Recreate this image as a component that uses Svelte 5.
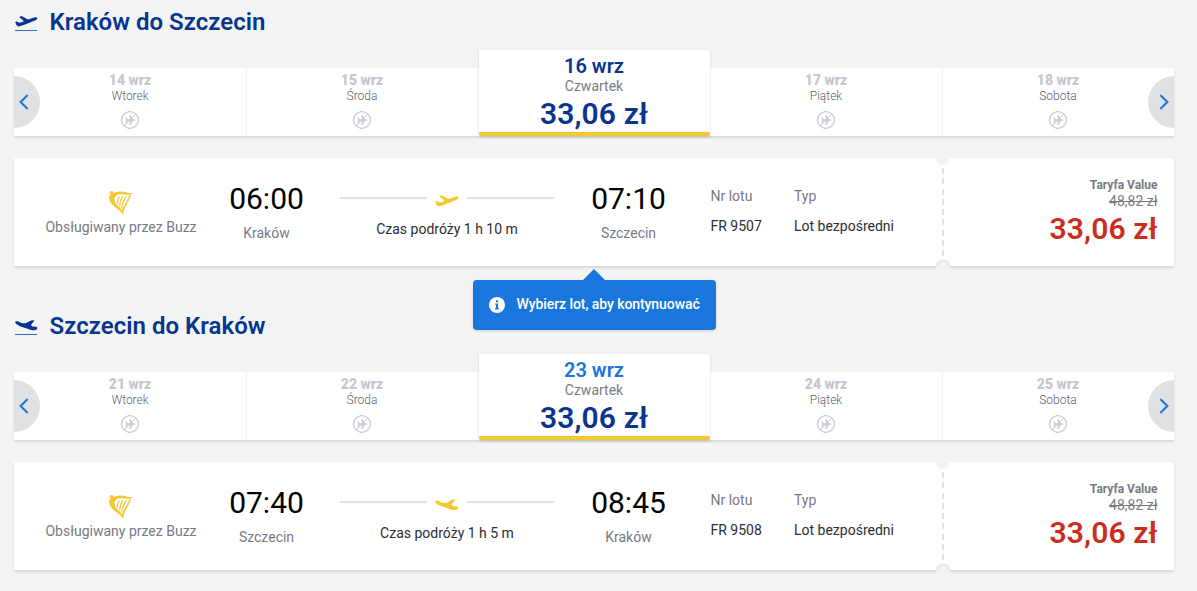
<script>
  const trips = [
    {
      title: 'Kraków do Szczecin', inbound: false,
      days: [['14 wrz', 'Wtorek'], ['15 wrz', 'Środa'], ['16 wrz', 'Czwartek'], ['17 wrz', 'Piątek'], ['18 wrz', 'Sobota']],
      depart: '06:00', from: 'Kraków', arrive: '07:10', to: 'Szczecin',
      duration: 'Czas podróży 1 h 10 m', number: 'FR 9507'
    },
    {
      title: 'Szczecin do Kraków', inbound: true,
      days: [['21 wrz', 'Wtorek'], ['22 wrz', 'Środa'], ['23 wrz', 'Czwartek'], ['24 wrz', 'Piątek'], ['25 wrz', 'Sobota']],
      depart: '07:40', from: 'Szczecin', arrive: '08:45', to: 'Kraków',
      duration: 'Czas podróży 1 h 5 m', number: 'FR 9508'
    }
  ];
</script>

{#snippet planeShape(inbound)}
  {#if inbound}
    <path d="M0 2.4.8 1.3 2.2 1.2C4 1.5 5.3 2.6 7.3 3.3L11.2 3.5 15.2 1.3C17 .2 18.8-.1 20.2.5L16.6 5.1 18.2 6.8 22 7C23.2 7.3 23.5 8.2 23 9.4 22 10.9 19.2 10.9 16.8 10.3L5.2 6.4C2.9 5.5 1 4.2 0 2.4Z" />
  {:else}
    <path d="M0 6.2 1.6 5.6 5 7 9 5.8 8.6 4.4 4.5 1.4C5 .3 6.5-.1 7.9.4L13.4 3.6 18.2 2C20.6 1 23 .9 23.4 2 23.5 3.1 22.1 4.1 20.3 4.9L9.9 9.2C7.5 10.2 5 10.9 3.4 10.8 2 10.5 1.3 9.6 1.1 8.2Z" />
  {/if}
{/snippet}

{#snippet chevron()}
  <svg width="10" height="16" viewBox="0 0 10 16"><path d="M8.7 1 1.6 8l7.1 7" fill="none" stroke="#1976dc" stroke-width="2" /></svg>
{/snippet}

<main>
  {#each trips as trip, i}
    <section class="trip">
      <h2>
        <svg class="title-icon" width="23" height="18" viewBox="0 0 23 18" fill="#073590">
          <g transform="translate(0 1) scale(.96 .96)">{@render planeShape(trip.inbound)}</g>
          <path d="M0 15h22v1H0z" fill="#366dbd" />
        </svg>
        {trip.title}
      </h2>

      <div class="carousel">
        {#each trip.days as [date, weekday], d}
          {#if d === 2}
            <div class="day selected" class:accent={trip.inbound}>
              <strong>{date}</strong>
              <span>{weekday}</span>
              <b class="fare">33,06 zł</b>
            </div>
          {:else}
            <div class="day">
              <strong>{date}</strong>
              <span>{weekday}</span>
              <svg width="18" height="18" viewBox="0 0 18 18" fill="none" stroke="#c4c8ce">
                <circle cx="9" cy="9" r="8.4" stroke-width="1.2" />
                <path d="M4.6 6.2h.9l1.1 2h2.6L8.3 4.3h1.2l2.3 3.9h1.7l1.2.8-1.2.8h-1.7l-2.3 3.9H8.3l.9-3.9H6.6l-1.1 2h-.9l.5-2.8Z" fill="#c4c8ce" stroke="none" />
                <path d="m3 15 12-12" stroke-width="1" />
              </svg>
            </div>
          {/if}
        {/each}
        <div class="arrow prev">{@render chevron()}</div>
        <div class="arrow next">{@render chevron()}</div>
      </div>

      <div class="ticket">
        <div class="operator">
          <svg width="24" height="24" viewBox="0 0 24 24" fill="#f1c933">
            <path d="M.8 1C1.7-.1 3.7-.2 4.5.8 4.9 1.4 4.8 2 4.6 2.4 6.3 1.2 8.6.3 11.5.4 15.5.5 18.2 2.3 23.8 2 22.7 3.2 20.5 3.9 18 3.8 14 3.6 9.5 2.3 6.7 5 4.8 7 5.2 10.2 6.8 12.3 8.6 14.7 11.8 16.2 13 19.4 14.3 14.7 18.4 11 20.4 4.1L21.9 3.7C20.8 10.5 15.1 14.8 13.8 24 12.3 19.2 6.2 17.2 2.8 13.2.2 10.1-.5 6.9.5 5.1L1.7 3.8C1.3 3 .9 2.4.4 1.9Z" />
            <path d="M10.5 5.5Q8.2 9.1 8.5 12.7M14 5.2Q10.5 10.6 10.8 15M17.3 5.2Q12.9 12 12.9 16.8" fill="none" stroke="#f1c933" stroke-width="1.2" />
          </svg>
          <span>Obsługiwany przez Buzz</span>
        </div>
        <div class="stop"><b>{trip.depart}</b><span>{trip.from}</span></div>
        <div class="journey">
          <div class="line">
            <i></i>
            <svg width="24" height="12" viewBox="0 -.4 24 12" fill="#f1c933">{@render planeShape(trip.inbound)}</svg>
            <i></i>
          </div>
          <span>{trip.duration}</span>
        </div>
        <div class="stop"><b>{trip.arrive}</b><span>{trip.to}</span></div>
        <dl class="number"><dt>Nr lotu</dt><dd>{trip.number}</dd></dl>
        <dl><dt>Typ</dt><dd>Lot bezpośredni</dd></dl>
        <div class="tear"></div>
        <div class="price">
          <strong>Taryfa Value</strong>
          <s>48,82 zł</s>
          <b>33,06 zł</b>
        </div>
      </div>

      {#if i === 0}
        <div class="tip">
          <svg width="16" height="16" viewBox="0 0 16 16">
            <circle cx="8" cy="8" r="8" fill="#fff" />
            <path d="M7 3.2h2v2H7zM6.2 6.6H9v4.6h1v1.2H6v-1.2h1V7.8h-.8z" fill="#1976dc" />
          </svg>
          <span>Wybierz lot, aby kontynuować</span>
        </div>
      {/if}
    </section>
  {/each}
</main>

<style>
  :global(body) { background: #f4f4f4; }
  main {
    height: 591px;
    overflow: hidden;
    font: 400 14px/20px Roboto, "Liberation Sans", sans-serif;
    color: #2b2d31;
  }
  svg { display: block; flex: none; }
  .trip { position: relative; height: 304px; width: 1160px; padding-left: 14px; }
  h2 {
    display: flex; align-items: center; gap: 11.5px;
    height: 44px; margin: 0; padding-left: 1px;
    font-size: 24px; line-height: 28px; font-weight: 600; letter-spacing: .03px; color: #073590;
  }
  .title-icon { margin-top: 3px; }
  .carousel {
    position: relative; display: grid; grid-template-columns: repeat(5, 232px);
    height: 68px; margin-top: 24px; background: #fff;
    box-shadow: 0 2px 2px rgba(0, 0, 0, .11);
  }
  .day {
    display: flex; flex-direction: column; align-items: center;
    box-sizing: border-box; height: 68px; padding-top: 4px; background: #fff;
  }
  .day + .day { box-shadow: inset 1px 0 #f1f1f1; }
  .day strong { font-size: 14px; line-height: 16px; font-weight: 900; color: #c4c8ce; }
  .day span { font-size: 12px; line-height: 16px; font-weight: 300; color: #5b606b; }
  .day svg { margin-top: 7px; }
  .day + .selected {
    height: 86px; margin: -18px 0 0 1px; padding-top: 5px;
    border-bottom: 4px solid #f1c933; border-radius: 2px;
    box-shadow: 0 1px 3px rgba(0, 0, 0, .15);
  }
  .selected strong { margin-right: 1px; font-size: 20px; line-height: 22px; font-weight: 600; color: #073590; }
  .selected.accent strong { color: #1976dc; }
  .selected span { margin-right: 1px; font-size: 14px; line-height: 18px; font-weight: 400; color: #777b84; }
  .selected .fare { margin: 1px 1px 0 0; font-size: 30px; line-height: 36px; font-weight: 600; letter-spacing: .1px; color: #073590; }
  .arrow {
    position: absolute; top: 8px; left: 0; display: flex; align-items: center;
    box-sizing: border-box; width: 26px; height: 52px; padding-left: 5px;
    background: #e0e1e3; border-radius: 0 26px 26px 0;
  }
  .next { left: auto; right: 0; transform: scaleX(-1); }
  .ticket {
    display: flex; height: 108px; margin-top: 22px; background: #fff;
    box-shadow: 0 2px 3px rgba(0, 0, 0, .13); border-radius: 1px;
  }
  .operator {
    display: flex; flex-direction: column; align-items: center;
    width: 214px; padding-top: 33px; color: #777b84;
  }
  .operator span { margin-top: 2px; }
  .stop { display: flex; flex-direction: column; align-items: center; width: 77px; padding-top: 23px; }
  .stop b { font-size: 30px; line-height: 36px; font-weight: 400; color: #000; }
  .stop span { margin-top: 6px; color: #777b84; }
  .journey { width: 214px; margin: 0 36px 0 35px; padding-top: 37px; text-align: center; }
  .line { display: flex; justify-content: space-between; margin-bottom: 12px; }
  .line i { width: 87px; height: 2px; margin-top: 2px; background: #e1e1e1; }
  dl { width: 142px; margin: 0; padding-top: 28px; }
  dl.number { width: 83.5px; padding-left: 43.5px; }
  dt { color: #777b84; }
  dd { margin: 10px 0 0; }
  .tear {
    width: 14px; height: 112px;
    background:
      radial-gradient(circle at 7px 0, #f4f4f4 6.5px, transparent 7.2px),
      radial-gradient(circle at 7px 109px, #f4f4f4 4px, #e7e7e7 7px, transparent 7.7px) 0 0 / 14px 108px no-repeat,
      linear-gradient(#f0f0f0, #f4f4f4) 0 108px / 14px 4px no-repeat,
      repeating-linear-gradient(#e1e1e1 0 6px, transparent 6px 10.3px) 6px 10px / 2px 89px no-repeat;
  }
  .price {
    display: flex; flex-direction: column; align-items: flex-end;
    flex: 1; padding: 19px 16.5px 0 0;
  }
  .price strong { font-size: 12px; line-height: 16px; color: #777b84; }
  .price s { line-height: 16px; color: #777b84; }
  .price b { margin-top: 2px; font-size: 30px; line-height: 36px; font-weight: 600; letter-spacing: .1px; color: #cc2d1e; }
  .tip {
    position: absolute; left: 473px; top: 280px; z-index: 2;
    display: flex; align-items: center; gap: 11.5px;
    box-sizing: border-box; width: 243px; height: 50px; padding: 0 0 2px 16px;
    background: #1976dc; border-radius: 4px; color: #fff; font-weight: 500;
    letter-spacing: -.08px;
    box-shadow: 0 1px 3px rgba(0, 0, 0, .15); white-space: nowrap;
  }
  .tip svg { margin-top: 2px; }
  .tip::before {
    content: ""; position: absolute; left: 110px; top: -11px;
    border: solid transparent; border-width: 0 11px 11px; border-bottom-color: #1976dc;
  }
</style>
